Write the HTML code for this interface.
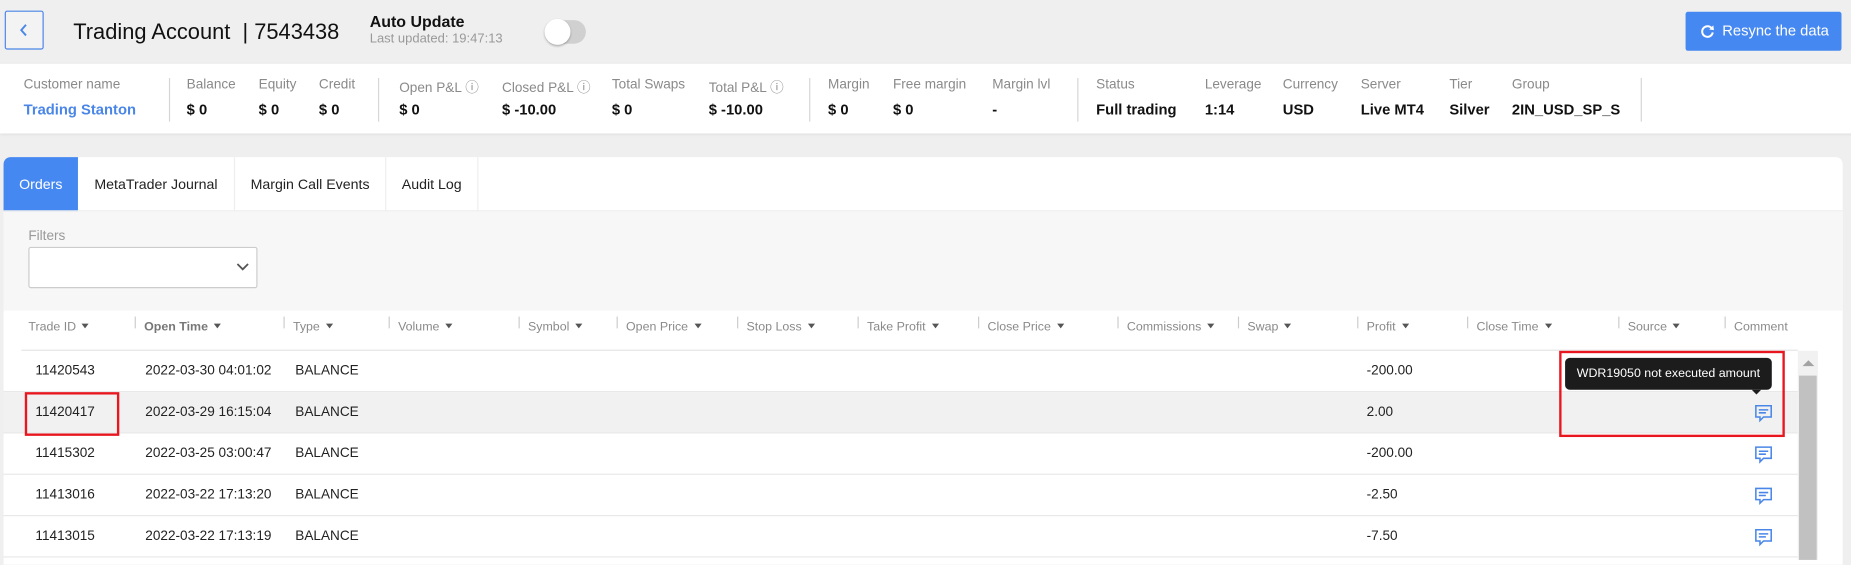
<!DOCTYPE html>
<html><head><meta charset="utf-8"><style>
*{box-sizing:border-box;margin:0;padding:0}
html,body{width:1851px;height:559px;overflow:hidden;background:#efefef;font-family:"Liberation Sans",sans-serif;color:#222}
#w{position:absolute;left:0;top:0;width:1570px;height:474px;transform:scale(1.1812);transform-origin:0 0;background:#efefef}
.a{position:absolute;white-space:nowrap}
.lab{font-size:11.5px;color:#8a8a8a;top:66px}
.val{font-size:12.5px;font-weight:bold;color:#111;top:86px}
.div{position:absolute;top:66px;width:1px;height:37px;background:#d6d6d6}
.th{position:absolute;top:271px;font-size:10.5px;color:#8a8a8a}
.car{display:inline-block;width:0;height:0;border-left:3.5px solid transparent;border-right:3.5px solid transparent;border-top:4px solid #555;margin-left:5px;vertical-align:2px}
.sep{position:absolute;top:268px;width:1px;height:10px;background:#ccc}
.row{position:absolute;left:3px;width:1519px;height:35px;border-bottom:1px solid #e8e8e8;font-size:11.5px}
.row span{position:absolute;top:11px}
.ic{position:absolute;left:1482px;top:10px}
</style></head><body><div id="w">
<div class="a" style="left:4px;top:9px;width:33px;height:33px;border:1px solid #4a86e8;border-radius:2px;background:#f3f3f3"></div>
<svg class="a" style="left:14px;top:19px" width="12" height="13" viewBox="0 0 12 13"><path d="M8 2 L4 6.5 L8 11" fill="none" stroke="#4a86e8" stroke-width="1.6"/></svg>
<div class="a" style="left:62px;top:16px;font-size:18.5px;color:#111">Trading Account &nbsp;| 7543438</div>
<div class="a" style="left:313px;top:11px;font-size:13.5px;font-weight:bold;color:#111">Auto Update</div>
<div class="a" style="left:313px;top:27px;font-size:11px;color:#999">Last updated: 19:47:13</div>
<div class="a" style="left:462px;top:17px;width:34px;height:20px;border-radius:10px;background:#d0d0d0"></div>
<div class="a" style="left:461px;top:16px;width:22px;height:22px;border-radius:11px;background:#fff;box-shadow:0 1px 2px rgba(0,0,0,.3)"></div>
<div class="a" style="left:1427px;top:10px;width:132px;height:33px;background:#4688f1;border-radius:2px;color:#fff;font-size:12.5px;line-height:33px;padding-left:31px">Resync the data</div>
<svg class="a" style="left:1439px;top:20px" width="13" height="13" viewBox="0 0 13 13"><path d="M10.5 4.5 A4.5 4.5 0 1 0 11 7.5" fill="none" stroke="#fff" stroke-width="1.7"/><path d="M8 5 L12 5.5 L11.5 1.5 Z" fill="#fff"/></svg>
<div class="a" style="left:0;top:54px;width:1570px;height:59px;background:#fff;box-shadow:0 1px 3px rgba(0,0,0,.08)"></div>
<div class="a lab" style="left:20px">Customer name</div><div class="a val" style="left:20px;color:#4a86e8">Trading Stanton</div>
<div class="div" style="left:143px"></div>
<div class="a lab" style="left:158px">Balance</div><div class="a val" style="left:158px">$ 0</div>
<div class="a lab" style="left:219px">Equity</div><div class="a val" style="left:219px">$ 0</div>
<div class="a lab" style="left:270px">Credit</div><div class="a val" style="left:270px">$ 0</div>
<div class="div" style="left:320px"></div>
<div class="a lab" style="left:338px">Open P&amp;L ⓘ</div><div class="a val" style="left:338px">$ 0</div>
<div class="a lab" style="left:425px">Closed P&amp;L ⓘ</div><div class="a val" style="left:425px">$ -10.00</div>
<div class="a lab" style="left:518px">Total Swaps</div><div class="a val" style="left:518px">$ 0</div>
<div class="a lab" style="left:600px">Total P&amp;L ⓘ</div><div class="a val" style="left:600px">$ -10.00</div>
<div class="div" style="left:685px"></div>
<div class="a lab" style="left:701px">Margin</div><div class="a val" style="left:701px">$ 0</div>
<div class="a lab" style="left:756px">Free margin</div><div class="a val" style="left:756px">$ 0</div>
<div class="a lab" style="left:840px">Margin lvl</div><div class="a val" style="left:840px">-</div>
<div class="div" style="left:912px"></div>
<div class="a lab" style="left:928px">Status</div><div class="a val" style="left:928px">Full trading</div>
<div class="a lab" style="left:1020px">Leverage</div><div class="a val" style="left:1020px">1:14</div>
<div class="a lab" style="left:1086px">Currency</div><div class="a val" style="left:1086px">USD</div>
<div class="a lab" style="left:1152px">Server</div><div class="a val" style="left:1152px">Live MT4</div>
<div class="a lab" style="left:1227px">Tier</div><div class="a val" style="left:1227px">Silver</div>
<div class="a lab" style="left:1280px">Group</div><div class="a val" style="left:1280px">2IN_USD_SP_S</div>
<div class="div" style="left:1389px"></div>
<div class="a" style="left:3px;top:133px;width:1557px;height:345px;background:#fff;border-radius:6px 6px 0 0"></div>
<div class="a" style="left:3px;top:179px;width:1557px;height:84px;background:#f7f7f7"></div>
<div class="a" style="left:3px;top:133px;width:63px;height:46px;background:#4688f1;border-radius:6px 0 0 0;color:#fff;font-size:12px;line-height:46px;text-align:center">Orders</div>
<div class="a" style="left:66px;top:133px;width:133px;height:46px;border-right:1px solid #eee;font-size:12px;line-height:46px;text-align:center">MetaTrader Journal</div>
<div class="a" style="left:199px;top:133px;width:128px;height:46px;border-right:1px solid #eee;font-size:12px;line-height:46px;text-align:center">Margin Call Events</div>
<div class="a" style="left:327px;top:133px;width:78px;height:46px;border-right:1px solid #eee;font-size:12px;line-height:46px;text-align:center">Audit Log</div>
<div class="a" style="left:3px;top:178px;width:1557px;height:1px;background:#eee"></div>
<div class="a" style="left:24px;top:194px;font-size:11.5px;color:#999">Filters</div>
<div class="a" style="left:24px;top:209px;width:194px;height:35px;background:#fff;border:1px solid #ccc;border-radius:2px"></div>
<svg class="a" style="left:200px;top:222px" width="11" height="8" viewBox="0 0 11 8"><path d="M1 1.5 L5.5 6 L10 1.5" fill="none" stroke="#555" stroke-width="1.5"/></svg>
<div class="th" style="left:24px">Trade ID<i class="car"></i></div>
<div class="sep" style="left:114px"></div><div class="th" style="left:122px;font-weight:bold;color:#777">Open Time<i class="car"></i></div>
<div class="sep" style="left:240px"></div><div class="th" style="left:248px">Type<i class="car"></i></div>
<div class="sep" style="left:329px"></div><div class="th" style="left:337px">Volume<i class="car"></i></div>
<div class="sep" style="left:439px"></div><div class="th" style="left:447px">Symbol<i class="car"></i></div>
<div class="sep" style="left:522px"></div><div class="th" style="left:530px">Open Price<i class="car"></i></div>
<div class="sep" style="left:624px"></div><div class="th" style="left:632px">Stop Loss<i class="car"></i></div>
<div class="sep" style="left:726px"></div><div class="th" style="left:734px">Take Profit<i class="car"></i></div>
<div class="sep" style="left:828px"></div><div class="th" style="left:836px">Close Price<i class="car"></i></div>
<div class="sep" style="left:946px"></div><div class="th" style="left:954px">Commissions<i class="car"></i></div>
<div class="sep" style="left:1048px"></div><div class="th" style="left:1056px">Swap<i class="car"></i></div>
<div class="sep" style="left:1149px"></div><div class="th" style="left:1157px">Profit<i class="car"></i></div>
<div class="sep" style="left:1242px"></div><div class="th" style="left:1250px">Close Time<i class="car"></i></div>
<div class="sep" style="left:1370px"></div><div class="th" style="left:1378px">Source<i class="car"></i></div>
<div class="sep" style="left:1460px"></div><div class="th" style="left:1468px">Comment</div>
<div class="a" style="left:18px;top:296px;width:1504px;height:1px;background:#e4e4e4"></div>
<div class="row" style="top:297px"><span style="left:27px">11420543</span><span style="left:120px">2022-03-30 04:01:02</span><span style="left:247px">BALANCE</span><span style="left:1154px">-200.00</span></div>
<div class="row" style="top:332px;background:#f1f1f1"><span style="left:27px">11420417</span><span style="left:120px">2022-03-29 16:15:04</span><span style="left:247px">BALANCE</span><span style="left:1154px">2.00</span>
<svg class="ic" width="16" height="16" viewBox="0 0 16 16"><path d="M1.5 1.5h13v9.5H8l-3 3v-3H1.5z" fill="none" stroke="#4a86e8" stroke-width="1.3"/><path d="M4 5h8M4 7.5h6" stroke="#4a86e8" stroke-width="1.3"/></svg></div>
<div class="row" style="top:367px"><span style="left:27px">11415302</span><span style="left:120px">2022-03-25 03:00:47</span><span style="left:247px">BALANCE</span><span style="left:1154px">-200.00</span>
<svg class="ic" width="16" height="16" viewBox="0 0 16 16"><path d="M1.5 1.5h13v9.5H8l-3 3v-3H1.5z" fill="none" stroke="#4a86e8" stroke-width="1.3"/><path d="M4 5h8M4 7.5h6" stroke="#4a86e8" stroke-width="1.3"/></svg></div>
<div class="row" style="top:402px"><span style="left:27px">11413016</span><span style="left:120px">2022-03-22 17:13:20</span><span style="left:247px">BALANCE</span><span style="left:1154px">-2.50</span>
<svg class="ic" width="16" height="16" viewBox="0 0 16 16"><path d="M1.5 1.5h13v9.5H8l-3 3v-3H1.5z" fill="none" stroke="#4a86e8" stroke-width="1.3"/><path d="M4 5h8M4 7.5h6" stroke="#4a86e8" stroke-width="1.3"/></svg></div>
<div class="row" style="top:437px"><span style="left:27px">11413015</span><span style="left:120px">2022-03-22 17:13:19</span><span style="left:247px">BALANCE</span><span style="left:1154px">-7.50</span>
<svg class="ic" width="16" height="16" viewBox="0 0 16 16"><path d="M1.5 1.5h13v9.5H8l-3 3v-3H1.5z" fill="none" stroke="#4a86e8" stroke-width="1.3"/><path d="M4 5h8M4 7.5h6" stroke="#4a86e8" stroke-width="1.3"/></svg></div>
<div class="a" style="left:1522px;top:297px;width:17px;height:177px;background:#f1f1f1"></div>
<div class="a" style="left:1523px;top:318px;width:15px;height:156px;background:#c1c1c1"></div>
<div class="a" style="left:1526px;top:305px;width:0;height:0;border-left:5px solid transparent;border-right:5px solid transparent;border-bottom:5px solid #a3a3a3"></div>
<div class="a" style="left:1325px;top:303px;width:175px;height:27px;background:#1c1c1c;border-radius:4px;color:#fff;font-size:10.5px;line-height:27px;text-align:center">WDR19050 not executed amount</div>
<div class="a" style="left:1483px;top:330px;width:0;height:0;border-left:4px solid transparent;border-right:4px solid transparent;border-top:4px solid #1c1c1c"></div>
<div class="a" style="left:21px;top:332px;width:80px;height:37px;border:2px solid #e8161f"></div>
<div class="a" style="left:1320px;top:297px;width:191px;height:73px;border:2px solid #e8161f"></div>
</div></body></html>
